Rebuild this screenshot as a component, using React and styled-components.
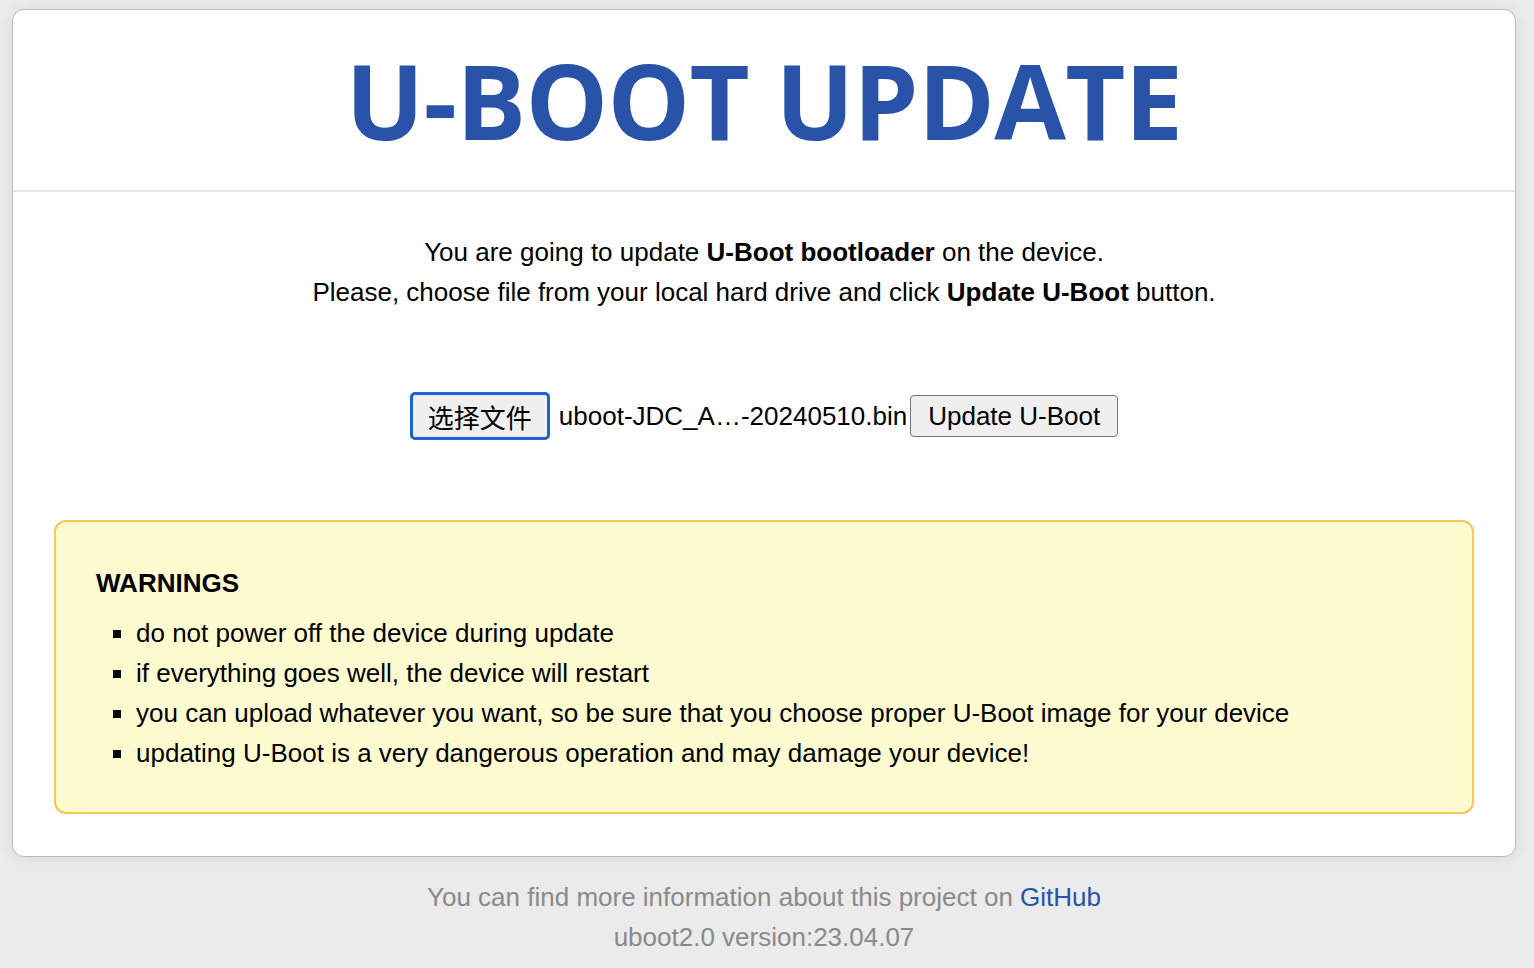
import React from 'react';
import styled, { createGlobalStyle } from 'styled-components';

const GlobalStyle = createGlobalStyle`
  html, body {
    margin: 0;
    padding: 0;
    background: #ebebeb;
  }
  body {
    font-family: "Liberation Sans", Arial, "Noto Sans CJK SC", sans-serif;
    color: #000;
  }
`;

const warnings = [
  'do not power off the device during update',
  'if everything goes well, the device will restart',
  'you can upload whatever you want, so be sure that you choose proper U-Boot image for your device',
  'updating U-Boot is a very dangerous operation and may damage your device!',
];

const App = () => {
  return (
    <Page>
      <GlobalStyle />
      <Card>
        <Header>
          <Title>U-BOOT UPDATE</Title>
        </Header>
        <Content>
          <Intro>
            You are going to update <b>U-Boot bootloader</b> on the device.
            <br />
            Please, choose file from your local hard drive and click <b>Update U-Boot</b> button.
          </Intro>
          <UploadRow>
            <PickButton type="button">选择文件</PickButton>
            <FileName>uboot-JDC_A…-20240510.bin</FileName>
            <SubmitButton type="button">Update U-Boot</SubmitButton>
          </UploadRow>
          <WarningBox>
            <WarningTitle>WARNINGS</WarningTitle>
            <WarningList>
              {warnings.map((w) => (
                <WarningItem key={w}>{w}</WarningItem>
              ))}
            </WarningList>
          </WarningBox>
        </Content>
      </Card>
      <Footer>
        <FooterLine>
          You can find more information about this project on <FooterLink href="#">GitHub</FooterLink>
        </FooterLine>
        <FooterLine>uboot2.0 version:23.04.07</FooterLine>
      </Footer>
    </Page>
  );
};

export default App;

const Page = styled.div`
  min-height: 968px;
  padding: 9px 18px 0 12px;
  box-sizing: border-box;
`;

const Card = styled.div`
  background: #fff;
  border: 1px solid #bcbcbc;
  border-radius: 12px;
  box-shadow: 0 2px 14px rgba(0, 0, 0, 0.08);
`;

const Header = styled.div`
  height: 180px;
  display: flex;
  align-items: center;
  justify-content: center;
  border-bottom: 2px solid #e6e6e6;
`;

const Title = styled.h1`
  margin: 0;
  font-family: "Open Sans", "DejaVu Sans", sans-serif;
  font-weight: 700;
  font-size: 104px;
  line-height: 1;
  color: #2853a8;
  letter-spacing: -0.7px;
`;

const Content = styled.div`
  padding: 40px 41px 42px;
`;

const Intro = styled.p`
  margin: 0;
  text-align: center;
  font-size: 26px;
  line-height: 40px;
`;

const UploadRow = styled.div`
  display: flex;
  align-items: center;
  justify-content: center;
  margin: 80px 0 80px;
  font-size: 26px;
`;

const PickButton = styled.button`
  font-family: "Liberation Sans", "Noto Sans CJK SC", sans-serif;
  font-size: 26px;
  height: 48px;
  padding: 0 15px;
  background: #efefef;
  color: #000;
  border: 3px solid #1a63d0;
  border-radius: 5px;
  margin-right: 9px;
`;

const FileName = styled.span`
  font-size: 26px;
`;

const SubmitButton = styled.button`
  font-family: "Liberation Sans", Arial, sans-serif;
  font-size: 26px;
  height: 42px;
  padding: 0 17px;
  margin-left: 3px;
  background: #efefef;
  color: #000;
  border: 1px solid #767676;
  border-radius: 4px;
`;

const WarningBox = styled.div`
  background: #fffbd1;
  border: 2px solid #fcc451;
  border-radius: 12px;
  padding: 45px 40px 39px;
`;

const WarningTitle = styled.div`
  font-weight: 700;
  font-size: 26px;
  line-height: 32px;
  margin-bottom: 14px;
`;

const WarningList = styled.ul`
  margin: 0;
  padding-left: 40px;
  list-style: square;
  font-size: 26px;
  line-height: 40px;
`;

const WarningItem = styled.li``;

const Footer = styled.div`
  padding-top: 20px;
  text-align: center;
  color: #8a8a8a;
  font-size: 26px;
  line-height: 40px;
`;

const FooterLine = styled.div``;

const FooterLink = styled.a`
  color: #2853a8;
  text-decoration: none;
`;
